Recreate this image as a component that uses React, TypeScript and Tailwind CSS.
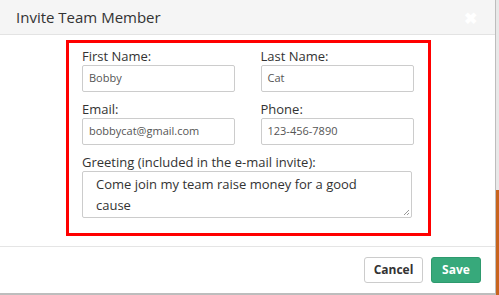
import React from "react";

export default function App() {
  const font = { fontFamily: '"Open Sans", "Liberation Sans", sans-serif' };
  const inputCls =
    "h-[27px] w-[153px] border border-[#ccc] rounded-[2px] flex items-center px-[6px] text-[11px] text-[#555]";
  const labelCls = "text-[13px] text-[#333] leading-[17px]";
  return (
    <div className="w-[499px] h-[295px] flex overflow-hidden bg-white" style={font}>
      <div className="w-[496px] h-[295px] flex flex-col border-r border-[#bdbdbd]">
        <div className="h-[293px] flex flex-col">
          {/* Header */}
          <div className="h-[35px] shrink-0 bg-[#f5f5f5] border-b border-[#e3e3e3] flex items-center justify-between pl-[16px] pr-[18px]">
            <span className="text-[15px] text-[#333] leading-none mt-[1px]">Invite Team Member</span>
            <span className="text-white text-[16px] font-bold leading-none mt-[2px]">✖</span>
          </div>
          {/* Body */}
          <div className="flex-1 pt-[5px] pl-[66px]">
            <div className="w-[365px] h-[196px] border-[3px] border-[#ff0000] pt-[5px] px-[13px]">
              <div className="grid grid-cols-2 gap-x-[24px]">
                <div className="flex flex-col">
                  <label className={labelCls}>First Name:</label>
                  <div className={inputCls}>Bobby</div>
                </div>
                <div className="flex flex-col">
                  <label className={labelCls}>Last Name:</label>
                  <div className={inputCls}>Cat</div>
                </div>
                <div className="flex flex-col mt-[9px]">
                  <label className={labelCls}>Email:</label>
                  <div className={inputCls}>bobbycat@gmail.com</div>
                </div>
                <div className="flex flex-col mt-[9px]">
                  <label className={labelCls}>Phone:</label>
                  <div className={inputCls}>123-456-7890</div>
                </div>
              </div>
              <div className="flex flex-col mt-[9px]">
                <label className={labelCls}>Greeting (included in the e-mail invite):</label>
                <div className="relative h-[47px] w-[330px] border border-[#ccc] rounded-[2px] pl-[13px] pr-[20px] pt-[2px] text-[13px] leading-[21px] text-[#333]">
                  Come join my team raise money for a good cause
                  <svg className="absolute right-[1px] bottom-[1px]" width="7" height="7" viewBox="0 0 7 7">
                    <path d="M6 1 L1 6 M6 4 L4 6" stroke="#999" strokeWidth="1" />
                  </svg>
                </div>
              </div>
            </div>
          </div>
          {/* Footer */}
          <div className="h-[47px] shrink-0 border-t border-[#e5e5e5] flex items-center justify-end gap-[8px] pr-[14px]">
            <button className="h-[26px] w-[59px] border border-[#ccc] rounded-[3px] bg-white text-[12px] font-bold text-[#333] leading-none">Cancel</button>
            <button className="h-[26px] w-[50px] border border-[#2e9a6e] rounded-[3px] bg-[#37a97b] text-[12px] font-bold text-white leading-none">Save</button>
          </div>
        </div>
        <div className="h-[2px] bg-[#bdbdbd]" />
      </div>
      <div className="w-[3px] flex flex-col">
        <div className="h-[190px] bg-[#e8e8e8]" />
        <div className="flex-1 bg-[#c8641e]" />
      </div>
    </div>
  );
}
